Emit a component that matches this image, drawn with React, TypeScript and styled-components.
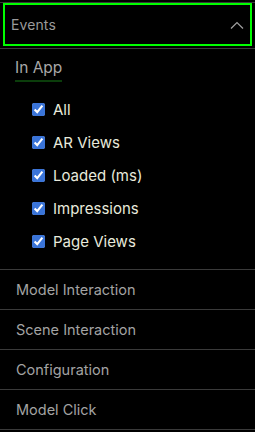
import React, { useState } from "react";
import styled, { createGlobalStyle } from "styled-components";

const GlobalStyle = createGlobalStyle`
  html, body {
    margin: 0;
    padding: 0;
    background: #000;
  }
  body {
    font-family: Inter, "Noto Sans", "Liberation Sans", sans-serif;
  }
`;

const events = ["All", "AR Views", "Loaded (ms)", "Impressions", "Page Views"];
const sections = ["Model Interaction", "Scene Interaction", "Configuration", "Model Click"];

export default function App() {
  const [checked, setChecked] = useState<boolean[]>(events.map(() => true));

  const toggle = (i: number) => {
    setChecked((prev) => prev.map((v, idx) => (idx === i ? !v : v)));
  };

  return (
    <>
      <GlobalStyle />
      <Panel>
        <Item>
          <HeaderWrap>
            <Header>
              <HeaderTitle>Events</HeaderTitle>
              <svg width="14" height="8" viewBox="0 0 14 8">
                <path d="M1 7.5 L7 1.5 L13 7.5" fill="none" stroke="#a0a0a0" strokeWidth="1.2" />
              </svg>
            </Header>
          </HeaderWrap>
          <Body>
            <Tab>In App</Tab>
            <List>
              {events.map((e, i) => (
                <Row key={e}>
                  <Box type="checkbox" checked={checked[i]} onChange={() => toggle(i)} />
                  <Label>{e}</Label>
                </Row>
              ))}
            </List>
          </Body>
        </Item>
        {sections.map((s) => (
          <Section key={s}>{s}</Section>
        ))}
      </Panel>
    </>
  );
}

const Panel = styled.div`
  width: 255px;
  height: 432px;
  background: #000;
  padding-top: 2px;
  box-sizing: border-box;
  overflow: hidden;
`;

const Item = styled.div`
  border-top: 1px solid #3a3a3a;
  border-bottom: 1px solid #3a3a3a;
`;

const HeaderWrap = styled.div`
  height: 46px;
  box-sizing: border-box;
  border-bottom: 1px solid #3a3a3a;
  padding: 0 3px 2px 3px;
`;

const Header = styled.div`
  height: 43px;
  box-sizing: border-box;
  border: 2px solid #00ff00;
  display: flex;
  align-items: center;
  justify-content: space-between;
  padding: 0 6px 0 6px;
`;

const HeaderTitle = styled.div`
  color: #9a9a9a;
  font-size: 14px;
  letter-spacing: 0.1px;
`;

const Body = styled.div`
  padding: 8px 16px 19px 15px;
`;

const Tab = styled.div`
  display: inline-block;
  color: #a8a8a8;
  font-size: 15.5px;
  line-height: 18px;
  padding-bottom: 3px;
  border-bottom: 2px solid #0b3d0b;
`;

const List = styled.div`
  display: flex;
  flex-direction: column;
  padding: 18px 0 0 17px;
  gap: 15px;
`;

const Row = styled.label`
  display: flex;
  align-items: center;
  gap: 8px;
  height: 18px;
`;

const Box = styled.input`
  width: 13px;
  height: 13px;
  margin: 0;
  accent-color: #3a74d8;
`;

const Label = styled.span`
  color: #e8eadc;
  font-size: 15px;
`;

const Section = styled.div`
  height: 40px;
  border-bottom: 1px solid #3a3a3a;
  box-sizing: border-box;
  display: flex;
  align-items: center;
  padding-left: 16px;
  color: #a3a3a3;
  font-size: 14.5px;
`;
